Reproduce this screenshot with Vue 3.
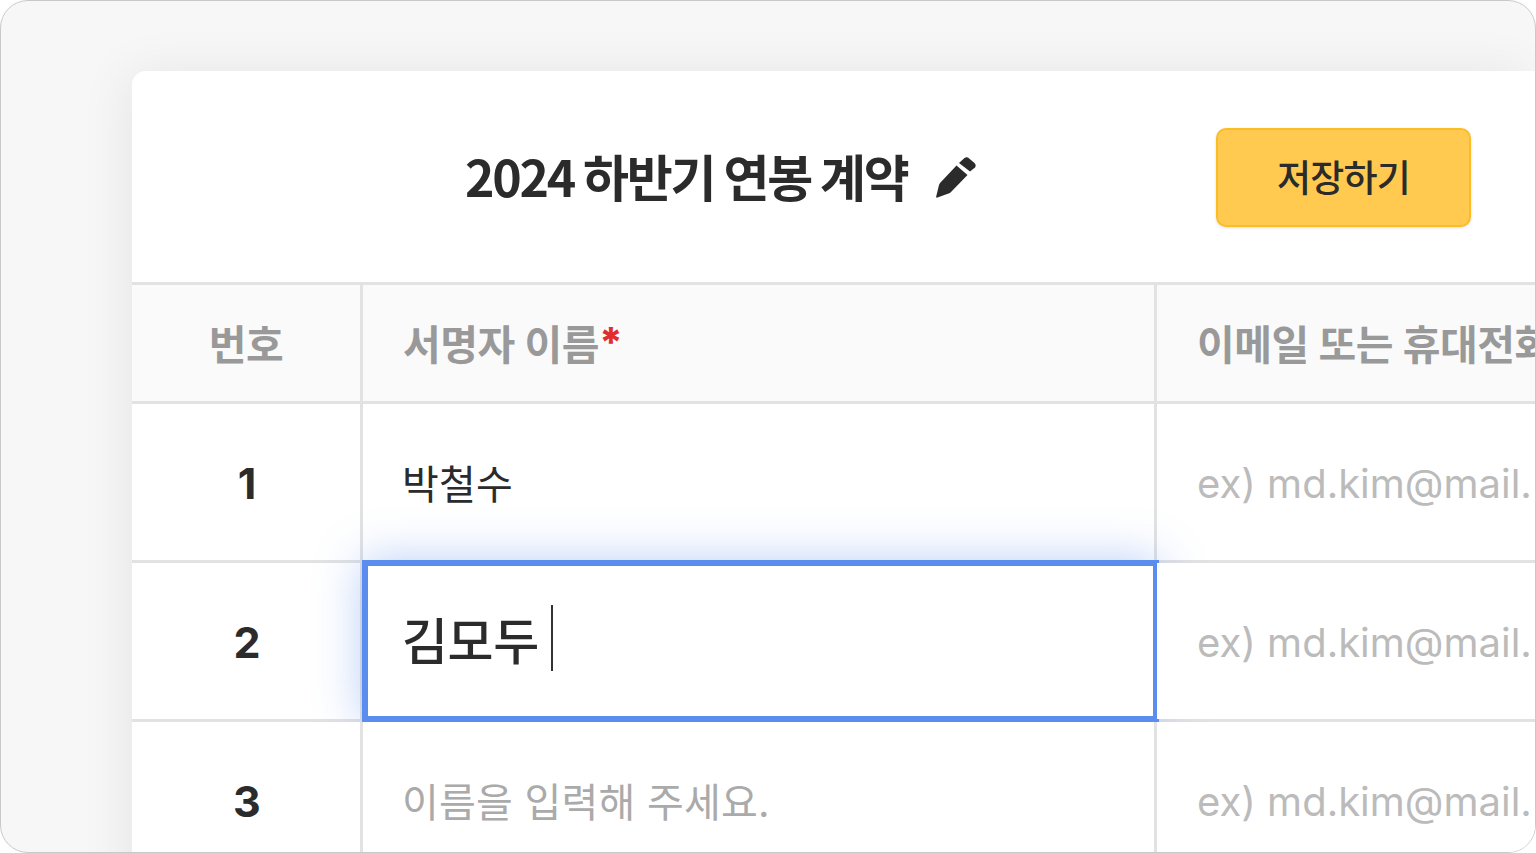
<template>
  <div class="frame">
    <div class="card">
      <header class="card-head">
        <div class="title-wrap">
          <h1 class="title">2024 하반기 연봉 계약</h1>
          <svg class="pencil" viewBox="0 0 40 41" aria-hidden="true">
            <path d="M20.5 8.5 L31.5 18 L15 35 Q14 36 12.5 36.6 L1.5 40.6 Q-0.2 41 0.2 39.4 L3 28 Q3.4 26.6 4.5 25.5 Z" />
            <path d="M23 6 L28.5 1 Q30 0 32 0.5 L38.5 6 Q40.5 8 39 10.5 L34 14.5 Z" />
          </svg>
        </div>
        <button class="save">저장하기</button>
      </header>

      <div class="table">
        <div class="row head">
          <div class="cell num">번호</div>
          <div class="cell">서명자 이름<span class="req">*</span></div>
          <div class="cell mail">이메일 또는 휴대전화</div>
        </div>
        <div v-for="r in rows" :key="r.no" class="row body" :class="{ active: r.active, after: r.no === 3 }">
          <div class="cell num">{{ r.no }}</div>
          <div class="cell name" :class="{ focus: r.active, empty: !r.name }">
            <template v-if="r.name">{{ r.name }}</template>
            <template v-else>이름을 입력해 주세요.</template>
            <span v-if="r.active" class="caret"></span>
          </div>
          <div class="cell mail empty">ex) md.kim@mail.</div>
        </div>
      </div>
    </div>
  </div>
</template>

<script setup>
const rows = [
  { no: 1, name: '박철수' },
  { no: 2, name: '김모두', active: true },
  { no: 3, name: '' },
]
</script>

<style>
html, body { margin: 0; overflow: hidden; background: #fff; }
</style>

<style scoped>
.frame {
  box-sizing: border-box;
  width: 1536px;
  height: 853px;
  border: 1px solid #c9c9c9;
  border-radius: 28px;
  background: #f7f7f7;
  overflow: hidden;
  padding: 70px 0 0 131px;
  font-family: Inter, "Noto Sans CJK KR", sans-serif;
  color: #2b2b2b;
}
.card {
  height: 900px;
  background: #fff;
  border-radius: 14px 0 0 0;
  box-shadow: -6px 0 50px rgba(0, 0, 0, 0.07);
}
.card-head {
  height: 211px;
  display: flex;
  align-items: center;
  justify-content: space-between;
  padding: 0 64px 0 333px;
}
.title-wrap { display: flex; align-items: center; gap: 28px; }
.title {
  margin: 0;
  padding-bottom: 4px;
  font-family: "Noto Sans CJK KR", sans-serif;
  font-size: 50px;
  font-weight: 700;
  letter-spacing: -2.25px;
  line-height: 1;
  white-space: nowrap;
}
.pencil { width: 40px; height: 41px; margin-top: 2px; fill: #2b2b2b; }
.save {
  box-sizing: border-box;
  width: 255px;
  height: 99px;
  margin-top: 2px;
  background: #ffca4f;
  border: 2px solid #fbbd27;
  border-radius: 10px;
  box-shadow: 0 1px 3px rgba(0, 0, 0, 0.12);
  font: 500 37px Inter, "Noto Sans CJK KR", sans-serif;
  letter-spacing: -0.8px;
  color: #2b2b2b;
  padding: 0 0 4px;
}
.table { border-top: 3px solid #e2e2e2; }
.row {
  display: grid;
  grid-template-columns: 231px 794px 1fr;
  border-bottom: 3px solid #e2e2e2;
}
.row.head { height: 116px; background: #fafafa; }
.row.body { height: 156px; }
.row.after { position: relative; z-index: 2; background: #fff; }
.cell {
  position: relative;
  display: flex;
  align-items: center;
  padding-left: 40px;
  border-right: 3px solid #e2e2e2;
  white-space: nowrap;
  overflow: hidden;
  font-size: 40px;
}
.body .cell.mail { padding-top: 3px; }
.body .cell.num { padding: 2px 0 0 2px; }
.cell.mail { border-right: 0; min-width: 0; }
.active .cell.mail { z-index: 2; background: #fff; }
.cell.num {
  justify-content: center;
  padding-left: 0;
  font-weight: 700;
  font-size: 43px;
}
.head .cell {
  font-size: 41px;
  font-weight: 600;
  color: #999;
  letter-spacing: -0.5px;
  padding-bottom: 3px;
}
.req { color: #e02d2d; font-weight: 800; }
.empty { color: #bbb; }
.name { padding-left: 39px; letter-spacing: 0.2px; }
.name.empty { color: #aaa; }
.name.focus {
  font-size: 50px;
  font-weight: 500;
  letter-spacing: -0.4px;
  overflow: visible;
  box-sizing: border-box;
  margin: -3px -2px -3px -1px;
  padding: 0 0 6px 34px;
  border: 6px solid #5b8def;
  background: #fff;
  box-shadow: 0 0 44px rgba(91, 141, 239, 0.42);
  z-index: 1;
}
.caret {
  width: 2px;
  height: 66px;
  margin-left: 12px;
  background: #333;
}
</style>
